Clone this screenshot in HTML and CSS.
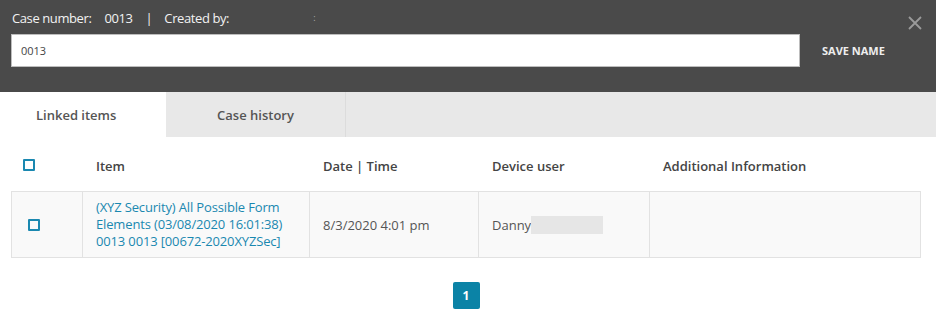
FILE: index.html
```html
<!DOCTYPE html>
<html lang="en">
<head>
    <meta charset="UTF-8">
    <title>Case 0013</title>
    <link rel="stylesheet" href="styles.css">
</head>
<body>
    <div class="case-header">
        <div class="meta">
            <div class="meta-text">
                <span>Case number:</span>
                <span class="case-no">0013</span>
                <span class="sep">|</span>
                <span>Created by:</span>
                <span class="creator"></span>
                <span class="colon">:</span>
            </div>
            <svg class="close" width="14" height="14" viewBox="0 0 14 14">
                <path d="M1 1 L13 13 M13 1 L1 13" stroke="#9a9a9a" stroke-width="1.8" fill="none"/>
            </svg>
        </div>
        <div class="name-row">
            <input type="text" class="name-input" value="0013">
            <button class="save-btn">SAVE NAME</button>
        </div>
    </div>

    <div class="tabs">
        <div class="tab active">Linked items</div>
        <div class="tab">Case history</div>
    </div>

    <div class="content">
        <div class="grid head">
            <div class="cell check-cell"><span class="checkbox"></span></div>
            <div class="cell">Item</div>
            <div class="cell">Date | Time</div>
            <div class="cell">Device user</div>
            <div class="cell">Additional Information</div>
        </div>
        <div class="grid row">
            <div class="cell check-cell"><span class="checkbox"></span></div>
            <div class="cell"><a href="#" class="item-link">(XYZ Security) All Possible Form Elements (03/08/2020 16:01:38) 0013 0013 [00672-2020XYZSec]</a></div>
            <div class="cell">8/3/2020 4:01 pm</div>
            <div class="cell">Danny<span class="redacted"></span></div>
            <div class="cell"></div>
        </div>

        <div class="pager">
            <span class="page current">1</span>
        </div>
    </div>
</body>
</html>
```

FILE: styles.css
```css
body {
    margin: 0;
    font-family: 'Open Sans', 'Liberation Sans', sans-serif;
    background: white;
    color: #555;
}
.case-header {
    background: #4a4a4a;
    height: 92px;
    box-sizing: border-box;
    padding: 9px 14px 0 11px;
}
.meta {
    display: flex;
    justify-content: space-between;
    align-items: center;
    height: 18px;
}
.meta-text {
    color: #f2f2f2;
    font-size: 13px;
    letter-spacing: -0.4px;
    padding-left: 1px;
    display: flex;
}
.case-no {
    margin-left: 13px;
}
.sep {
    margin: 0 12px 0 13px;
}
.creator {
    width: 84px;
}
.colon {
    color: #aaa;
    font-size: 9px;
    line-height: 18px;
}
.close {
    margin-top: 10px;
}
.name-row {
    display: flex;
    align-items: center;
    margin-top: 7px;
}
.name-input {
    width: 789px;
    height: 33px;
    box-sizing: border-box;
    border: 1px solid #bdbdbd;
    padding: 0 9px;
    font-family: inherit;
    font-size: 11px;
    color: #444;
    outline: none;
}
.save-btn {
    background: none;
    border: none;
    color: #eee;
    font-family: inherit;
    font-weight: 700;
    font-size: 11px;
    margin-left: 22px;
    padding: 0;
    cursor: pointer;
}
.tabs {
    display: flex;
    height: 45px;
    background: #e8e8e8;
}
.tab {
    display: flex;
    align-items: center;
    justify-content: center;
    width: 179px;
    font-size: 13px;
    font-weight: 600;
    color: #555;
    border-right: 1px solid #dcdcdc;
}
.tab.active {
    background: white;
    width: 166px;
    border-right: none;
    justify-content: flex-start;
    padding-left: 36px;
    box-sizing: border-box;
}
.content {
    padding: 0 15px 0 11px;
}
.grid {
    display: grid;
    grid-template-columns: 70px 227px 169px 171px 1fr;
    border: 1px solid transparent;
}
.head {
    height: 54px;
    box-sizing: border-box;
    padding-top: 4px;
    align-items: center;
    font-size: 13px;
    font-weight: 600;
    color: #444;
}
.head .cell {
    padding-left: 14px;
}
.head .check-cell {
    padding-left: 11px;
}
.row {
    background: #f9f9f9;
    border-color: #e2e2e2;
    min-height: 67px;
    box-sizing: border-box;
    font-size: 13px;
    color: #555;
}
.row .cell {
    display: flex;
    align-items: center;
    padding: 7px 13px;
    border-left: 1px solid #e2e2e2;
}
.row .cell:first-child {
    border-left: none;
    padding-left: 16px;
}
.checkbox {
    display: inline-block;
    width: 12px;
    height: 12px;
    box-sizing: border-box;
    border: 2px solid #1a88b0;
    border-radius: 1px;
}
.item-link {
    color: #1a88b0;
    text-decoration: none;
    line-height: 17px;
    letter-spacing: -0.15px;
}
.redacted {
    display: inline-block;
    width: 72px;
    height: 18px;
    background: #e6e6e6;
}
.pager {
    display: flex;
    justify-content: center;
    margin-top: 24px;
}
.page {
    width: 27px;
    height: 27px;
    display: flex;
    align-items: center;
    justify-content: center;
    background: #0b83a6;
    color: white;
    font-weight: 700;
    font-size: 12px;
    border-radius: 2px;
}
```
